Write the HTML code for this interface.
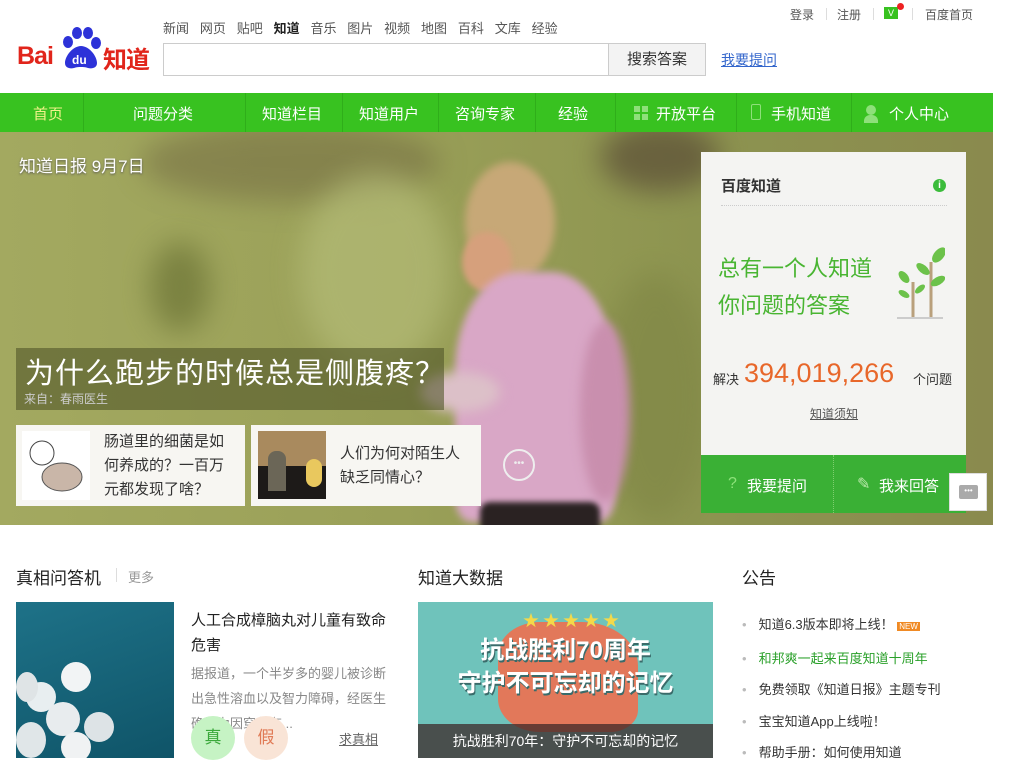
<!DOCTYPE html>
<html><head><meta charset="utf-8"><style>
*{margin:0;padding:0;box-sizing:border-box}
body{width:1024px;height:768px;overflow:hidden;background:#fff;font-family:"Liberation Sans","Noto Sans CJK SC",sans-serif;color:#333;position:relative}
.a{position:absolute}
.top a{color:#555;font-size:13px;text-decoration:none}
.nav{left:0;top:93px;width:993px;height:39px;background:#38c220;}
.nav span{position:absolute;top:10px;color:#fff;font-size:15px}
.nav i{position:absolute;top:0;width:1px;height:39px;background:#2fae1a}
.hero{left:0;top:132px;width:993px;height:393px;overflow:hidden;background:linear-gradient(90deg,#a3a960 0%,#9aa058 40%,#8d9450 70%,#8a8a4e 100%)}
.blob{position:absolute;border-radius:50%;filter:blur(14px)}
</style></head><body>
<div class="a" style="left:17px;top:42px;font:bold 25px 'Liberation Sans',sans-serif;color:#e1251b;letter-spacing:-1px">Bai</div>
<svg class="a" style="left:58px;top:26px" width="46" height="44" viewBox="0 0 46 44"><g fill="#2d32d8"><ellipse cx="10" cy="16" rx="5" ry="6"/><ellipse cx="19" cy="7" rx="5" ry="6"/><ellipse cx="30" cy="7" rx="5" ry="6"/><ellipse cx="38" cy="17" rx="5" ry="6"/><path d="M23 20c-8 0-16 10-16 17 0 5 5 6 9 5 3-1 5-1 7-1s4 0 7 1c4 1 9 0 9-5 0-7-8-17-16-17z"/></g><text x="14" y="38" fill="#fff" font-size="12" font-family="Liberation Sans" font-weight="bold">du</text></svg>
<div class="a" style="left:103px;top:40px;font:bold 24px 'Noto Sans CJK SC',sans-serif;color:#e1251b;letter-spacing:-1px">知道</div>
<div class="a top" style="left:163px;top:18px;font-size:13px;word-spacing:0">
<a>新闻</a>&nbsp;&nbsp; <a>网页</a>&nbsp;&nbsp; <a>贴吧</a>&nbsp;&nbsp; <a style="color:#222;font-weight:bold">知道</a>&nbsp;&nbsp; <a>音乐</a>&nbsp;&nbsp; <a>图片</a>&nbsp;&nbsp; <a>视频</a>&nbsp;&nbsp; <a>地图</a>&nbsp;&nbsp; <a>百科</a>&nbsp;&nbsp; <a>文库</a>&nbsp;&nbsp; <a>经验</a></div>
<div class="a" style="left:163px;top:43px;width:446px;height:33px;border:1px solid #ccc;border-right:none"></div>
<div class="a" style="left:608px;top:43px;width:98px;height:33px;border:1px solid #ccc;background:#f3f3f3;font-size:15px;color:#333;text-align:center;line-height:31px">搜索答案</div>
<div class="a" style="left:721px;top:50px;font-size:14px;color:#3366cc;text-decoration:underline">我要提问</div>
<div class="a" style="left:790px;top:6px;font-size:12px;color:#555">登录</div>
<div class="a" style="left:826px;top:8px;width:1px;height:12px;background:#ddd"></div>
<div class="a" style="left:837px;top:6px;font-size:12px;color:#555">注册</div>
<div class="a" style="left:873px;top:8px;width:1px;height:12px;background:#ddd"></div>
<div class="a" style="left:884px;top:7px;width:14px;height:12px;background:#38c220;color:#fff;font-size:9px;text-align:center;line-height:12px">V</div>
<div class="a" style="left:897px;top:3px;width:7px;height:7px;border-radius:50%;background:#e22"></div>
<div class="a" style="left:912px;top:8px;width:1px;height:12px;background:#ddd"></div>
<div class="a" style="left:925px;top:6px;font-size:12px;color:#555">百度首页</div>

<div class="a nav">
<span style="left:33px;color:#f2f28a">首页</span><i style="left:83px"></i>
<span style="left:133px">问题分类</span><i style="left:245px"></i>
<span style="left:262px">知道栏目</span><i style="left:342px"></i>
<span style="left:359px">知道用户</span><i style="left:438px"></i>
<span style="left:455px">咨询专家</span><i style="left:535px"></i>
<span style="left:558px">经验</span><i style="left:615px"></i>
<svg class="a" style="left:634px;top:106px;position:fixed" width="14" height="14"><g fill="#8ee07a"><rect x="0" y="0" width="6" height="6"/><rect x="8" y="0" width="6" height="6"/><rect x="0" y="8" width="6" height="6"/><rect x="8" y="8" width="6" height="6"/></g></svg>
<span style="left:656px">开放平台</span><i style="left:736px"></i>
<span style="left:751px;top:11px;width:10px;height:16px;border:1.5px solid #8ee07a;border-radius:2px"></span>
<span style="left:771px">手机知道</span><i style="left:851px"></i>
<span style="left:866px;top:12px;width:10px;height:10px;border-radius:50%;background:#8ee07a"></span>
<span style="left:864px;top:22px;width:14px;height:8px;border-radius:6px 6px 0 0;background:#8ee07a"></span>
<span style="left:889px">个人中心</span>
</div>

<div class="a hero">
<div class="blob" style="left:140px;top:-10px;width:300px;height:80px;background:#6f6540;opacity:.5"></div>
<div class="blob" style="left:150px;top:110px;width:60px;height:90px;background:#6c7436;opacity:.7"></div>
<div class="blob" style="left:300px;top:40px;width:150px;height:200px;background:#b8c07c;opacity:.6"></div>
<div class="blob" style="left:600px;top:-10px;width:120px;height:70px;background:#5a4c36;opacity:.7"></div>
<div class="blob" style="left:600px;top:140px;width:110px;height:250px;background:#7e8544;opacity:.6"></div>
<div class="blob" style="left:465px;top:30px;width:90px;height:120px;background:#c7a877;filter:blur(4px)"></div>
<div class="blob" style="left:462px;top:100px;width:50px;height:60px;background:#d6a07c;filter:blur(3px)"></div>
<div class="blob" style="left:455px;top:140px;width:160px;height:250px;border-radius:40% 40% 10% 10%;background:#d9a7c6;filter:blur(4px)"></div>
<div class="blob" style="left:580px;top:190px;width:50px;height:180px;background:#c98fae;filter:blur(5px)"></div>
<div class="blob" style="left:420px;top:240px;width:80px;height:40px;background:#dcc0c8;filter:blur(6px)"></div>
<div class="blob" style="left:480px;top:370px;width:120px;height:40px;border-radius:10px;background:#2a2222;filter:blur(3px)"></div>
<div class="a" style="left:19px;top:20px;color:#fff;font-size:17px;text-shadow:0 1px 2px #555">知道日报 9月7日</div>
<div class="a" style="left:16px;top:216px;width:428px;height:62px;background:rgba(80,85,40,.6)"></div>
<div class="a" style="left:25px;top:218px;color:#fff;font-size:29px;letter-spacing:1px">为什么跑步的时候总是侧腹疼？</div>
<div class="a" style="left:24px;top:258px;color:#ccc;font-size:12px">来自：春雨医生</div>
<div class="a" style="left:16px;top:293px;width:229px;height:81px;background:#f7f6f2"></div>
<div class="a" style="left:22px;top:299px;width:68px;height:69px;background:#fff"><svg width="68" height="69"><circle cx="20" cy="22" r="12" fill="#fff" stroke="#444"/><ellipse cx="40" cy="46" rx="20" ry="14" fill="#c9b6a8" stroke="#555"/></svg></div>
<div class="a" style="left:104px;top:298px;width:130px;font-size:15px;line-height:24px;color:#333">肠道里的细菌是如何养成的？一百万元都发现了啥？</div>
<div class="a" style="left:251px;top:293px;width:230px;height:81px;background:#f7f6f2"></div>
<div class="a" style="left:258px;top:299px;width:68px;height:68px;background:#a98a5e"><div class="a" style="left:0;top:35px;width:68px;height:33px;background:#1d1a18"></div><div class="a" style="left:10px;top:20px;width:18px;height:40px;background:#6b6657;border-radius:8px 8px 0 0"></div><div class="a" style="left:48px;top:28px;width:16px;height:28px;background:#e9c85e;border-radius:8px"></div></div>
<div class="a" style="left:340px;top:310px;width:130px;font-size:15px;line-height:24px;color:#333">人们为何对陌生人缺乏同情心？</div>
<div class="a" style="left:503px;top:317px;width:32px;height:32px;border:2px solid #eee;border-radius:50%;color:#eee;text-align:center;font-size:10px;line-height:26px">•••</div>
<div class="a" style="left:701px;top:20px;width:265px;height:303px;background:#f4f4f2"></div>
<div class="a" style="left:721px;top:43px;font-size:15px;font-weight:bold;color:#333">百度知道</div>
<div class="a" style="left:933px;top:47px;width:13px;height:13px;border-radius:50%;background:#3bbc3b;color:#fff;font-size:10px;text-align:center;line-height:13px;font-weight:bold">i</div>
<div class="a" style="left:721px;top:73px;width:226px;border-top:1px dotted #ccc"></div>
<div class="a" style="left:718px;top:118px;font-size:22px;line-height:37px;color:#49b532">总有一个人知道<br>你问题的答案</div>
<svg class="a" style="left:895px;top:115px" width="50" height="75" viewBox="0 0 50 75"><g stroke="#b9a07c" stroke-width="3"><line x1="36" y1="15" x2="36" y2="70"/><line x1="18" y1="35" x2="18" y2="70"/></g><g fill="#6cc24a"><ellipse cx="44" cy="8" rx="5" ry="9" transform="rotate(40 44 8)"/><ellipse cx="28" cy="22" rx="4" ry="8" transform="rotate(-50 28 22)"/><ellipse cx="43" cy="34" rx="4" ry="8" transform="rotate(60 43 34)"/><ellipse cx="9" cy="30" rx="4" ry="7" transform="rotate(-40 9 30)"/><ellipse cx="25" cy="42" rx="3" ry="6" transform="rotate(50 25 42)"/><ellipse cx="9" cy="47" rx="3" ry="6" transform="rotate(-60 9 47)"/></g><line x1="2" y1="71" x2="48" y2="71" stroke="#ccc" stroke-width="2"/></svg>
<div class="a" style="left:713px;top:237px;font-size:13px;color:#333">解决</div>
<div class="a" style="left:744px;top:226px;font-size:27px;color:#e8672a">394,019,266</div>
<div class="a" style="left:913px;top:237px;font-size:13px;color:#333">个问题</div>
<div class="a" style="left:810px;top:273px;font-size:12px;color:#555;text-decoration:underline">知道须知</div>
<div class="a" style="left:701px;top:323px;width:265px;height:58px;background:#3ab035"></div>
<div class="a" style="left:833px;top:323px;width:1px;height:58px;border-left:1px dotted #7ecf6e"></div>
<div class="a" style="left:728px;top:343px;color:#8de27a;font-size:16px">?</div>
<div class="a" style="left:747px;top:343px;color:#fff;font-size:15px">我要提问</div>
<div class="a" style="left:857px;top:342px;color:#bdeaae;font-size:16px">✎</div>
<div class="a" style="left:879px;top:343px;color:#fff;font-size:15px">我来回答</div>
</div>
<div class="a" style="left:949px;top:473px;width:38px;height:38px;background:#fff;border:1px solid #ddd"><div class="a" style="left:9px;top:11px;width:19px;height:14px;background:#aaa;border-radius:2px;color:#fff;font-size:8px;text-align:center;line-height:12px">•••</div></div>

<div class="a" style="left:16px;top:564px;font-size:17px;color:#222">真相问答机</div>
<div class="a" style="left:116px;top:568px;width:1px;height:14px;background:#ddd"></div>
<div class="a" style="left:128px;top:567px;font-size:13px;color:#999">更多</div>
<div class="a" style="left:16px;top:602px;width:158px;height:156px;background:linear-gradient(160deg,#1e7288,#0f5468);overflow:hidden">
<div class="a" style="left:10px;top:80px;width:30px;height:30px;border-radius:50%;background:#e8eef0"></div>
<div class="a" style="left:45px;top:60px;width:30px;height:30px;border-radius:50%;background:#f2f4f5"></div>
<div class="a" style="left:30px;top:100px;width:34px;height:34px;border-radius:50%;background:#e8ecee"></div>
<div class="a" style="left:68px;top:110px;width:30px;height:30px;border-radius:50%;background:#dde3e6"></div>
<div class="a" style="left:0px;top:120px;width:30px;height:36px;border-radius:50%;background:#e0e6e8"></div>
<div class="a" style="left:45px;top:130px;width:30px;height:30px;border-radius:50%;background:#f0f2f3"></div>
<div class="a" style="left:0px;top:70px;width:22px;height:30px;border-radius:50%;background:#dfe4e6"></div>
</div>
<div class="a" style="left:191px;top:608px;width:195px;font-size:15px;line-height:25px;color:#222">人工合成樟脑丸对儿童有致命危害</div>
<div class="a" style="left:191px;top:661px;width:198px;font-size:13px;line-height:25px;color:#888;height:74px;overflow:hidden">据报道，一个半岁多的婴儿被诊断出急性溶血以及智力障碍，经医生确认为因穿戴有...</div>
<div class="a" style="left:191px;top:716px;width:44px;height:44px;border-radius:50%;background:#c6f3c4;color:#3aa83a;font-size:17px;text-align:center;line-height:44px">真</div>
<div class="a" style="left:244px;top:716px;width:44px;height:44px;border-radius:50%;background:#f9e4d6;color:#e07a55;font-size:17px;text-align:center;line-height:44px">假</div>
<div class="a" style="left:339px;top:729px;font-size:13px;color:#666;text-decoration:underline">求真相</div>

<div class="a" style="left:418px;top:564px;font-size:17px;color:#222">知道大数据</div>
<div class="a" style="left:418px;top:602px;width:295px;height:156px;background:#6fc3bb;overflow:hidden">
<div class="a" style="left:80px;top:20px;width:140px;height:110px;background:#e2785a;border-radius:30% 40% 20% 30%"></div>
<div class="a" style="left:0;top:32px;width:295px;text-align:center;color:#fff;font-size:24px;font-weight:bold;line-height:33px;text-shadow:1px 2px 0 #3a6b6a">抗战胜利70周年<br>守护不可忘却的记忆</div>
<div class="a" style="left:105px;top:5px;color:#f3d94a;font-size:16px;letter-spacing:4px">★★★★★</div>
<div class="a" style="left:0;top:122px;width:295px;height:34px;background:rgba(60,40,40,.75);color:#fff;font-size:14px;text-align:center;line-height:34px">抗战胜利70年：守护不可忘却的记忆</div>
</div>

<div class="a" style="left:742px;top:564px;font-size:17px;color:#222">公告</div>
<div class="a" style="left:742px;top:609px;font-size:13px;line-height:31.5px;color:#333">
<div><span style="color:#bbb;margin-right:12px">•</span>知道6.3版本即将上线！ <span style="background:#f08a24;color:#fff;font-size:8px;padding:0 2px">NEW</span></div>
<div style="color:#2aa02a"><span style="color:#bbb;margin-right:12px">•</span>和邦爽一起来百度知道十周年</div>
<div><span style="color:#bbb;margin-right:12px">•</span>免费领取《知道日报》主题专刊</div>
<div><span style="color:#bbb;margin-right:12px">•</span>宝宝知道App上线啦！</div>
<div><span style="color:#bbb;margin-right:12px">•</span>帮助手册：如何使用知道</div>
</div>
</body></html>
